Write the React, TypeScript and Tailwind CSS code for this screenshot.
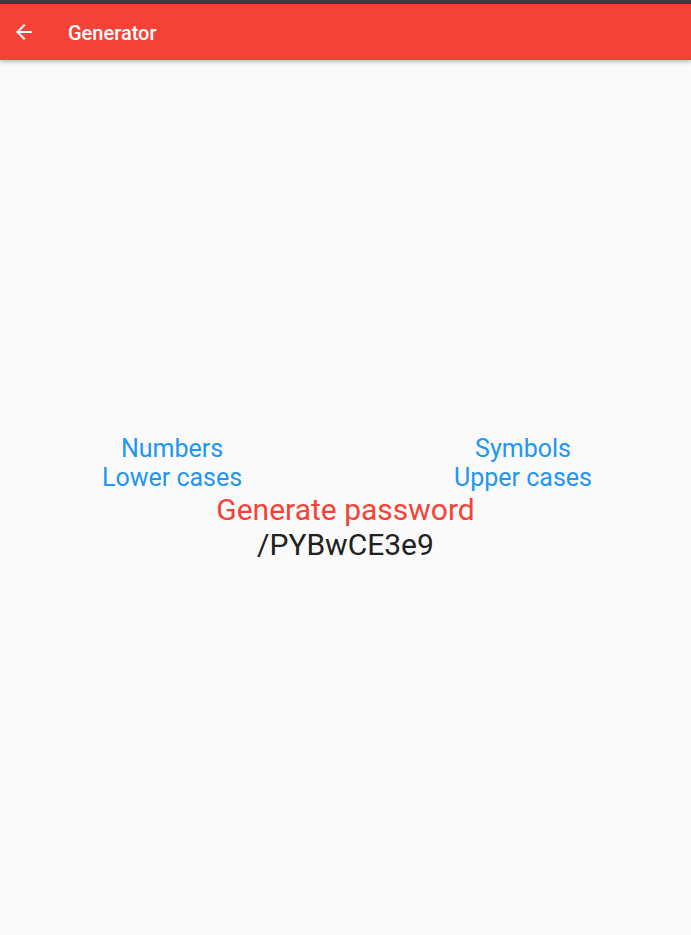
const options = [
  ["Numbers", "Lower cases"],
  ["Symbols", "Upper cases"],
];

const BackArrow = () => (
  <svg width="24" height="24" viewBox="0 0 24 24" fill="white">
    <path d="M20 11H7.83l5.59-5.59L12 4l-8 8 8 8 1.41-1.41L7.83 13H20v-2z" />
  </svg>
);

export default function App() {
  return (
    <div className="flex h-[935px] w-[691px] flex-col overflow-hidden bg-[#fafafa] font-['Roboto',sans-serif]">
      <div className="h-[4px] bg-[#3d3d3d]" />
      <header className="relative z-10 flex h-[56px] items-center bg-[#f44336] shadow-[0_2px_4px_rgba(0,0,0,0.25)]">
        <button className="ml-[12px] flex h-[24px] w-[24px] items-center justify-center">
          <BackArrow />
        </button>
        <h1 className="ml-[32px] pt-[2px] text-[20px] font-medium text-white">Generator</h1>
      </header>
      <main className="flex flex-1 flex-col items-center justify-center">
        <div className="flex w-full justify-between pl-[102px] pr-[99px]">
          {options.map((col) => (
            <div key={col[0]} className="flex flex-col items-center">
              {col.map((label) => (
                <span key={label} className="text-[25px] leading-[29px] text-[#2196f3]">
                  {label}
                </span>
              ))}
            </div>
          ))}
        </div>
        <span className="text-[30px] leading-[35px] text-[#f44336]">Generate password</span>
        <span className="text-[30px] leading-[35px] text-[#212121]">/PYBwCE3e9</span>
      </main>
    </div>
  );
}
